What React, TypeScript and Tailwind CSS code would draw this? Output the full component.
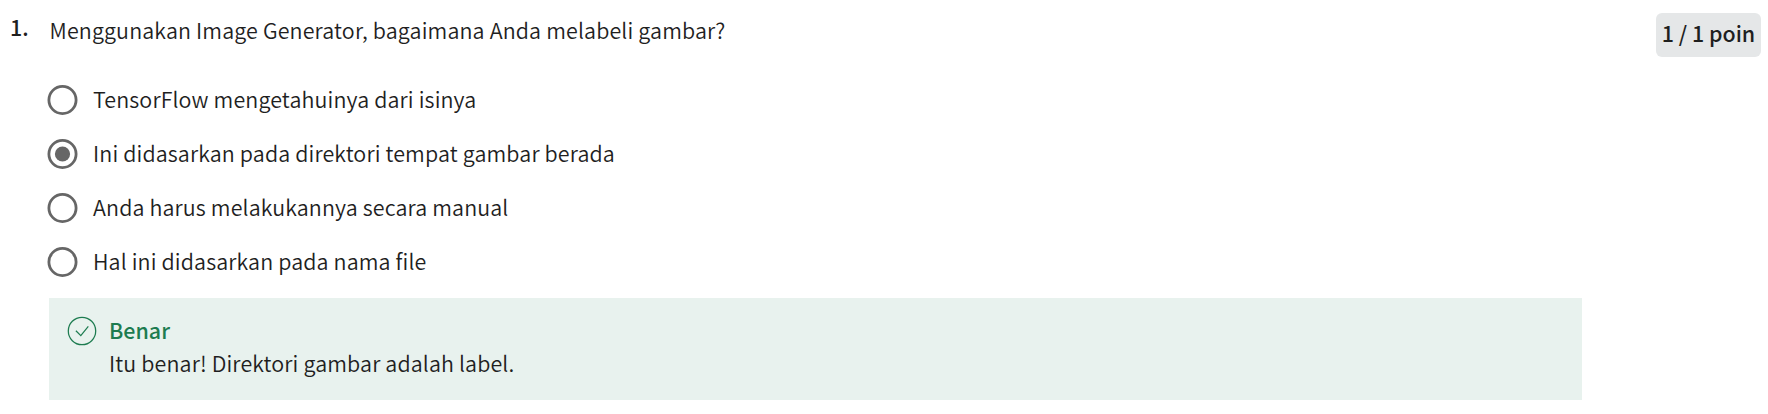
const options = [
  'TensorFlow mengetahuinya dari isinya',
  'Ini didasarkan pada direktori tempat gambar berada',
  'Anda harus melakukannya secara manual',
  'Hal ini didasarkan pada nama file',
];
const selected = 1;

function Radio({ checked }: { checked: boolean }) {
  return (
    <svg viewBox="0 0 31 30" className="h-[30px] w-[31px] shrink-0" fill="none">
      <circle cx="15.5" cy="15" r="13.6" stroke="#666" strokeWidth="2.8" />
      {checked && <circle cx="15.5" cy="15" r="7.6" fill="#666" />}
    </svg>
  );
}

function Feedback() {
  return (
    <section className="flex h-[102px] w-[1533px] gap-3 bg-[#e8f2ee] pl-[18px] pt-[15px] leading-[33px]">
      <svg viewBox="0 0 30 30" className="mt-[3px] size-[30px] shrink-0" fill="none" stroke="#1d7c50" strokeWidth="1.25">
        <circle cx="15" cy="15" r="13.7" />
        <path d="M8.9 14.8l4.9 4.8 7.5-9.3" />
      </svg>
      <div>
        <p className="font-medium text-[#1d7c50]">Benar</p>
        <p className="font-[350] tracking-[0.13px]">Itu benar! Direktori gambar adalah label.</p>
      </div>
    </section>
  );
}

export default function App() {
  return (
    <main className="flex h-[414px] w-[1768px] overflow-hidden bg-white font-['Noto_Sans_CJK_SC',sans-serif] text-[21.45px] leading-[30px] text-[#1f1f1f]">
      <div className="w-[49px] shrink-0 pl-[10px] pt-3 font-medium">1.</div>
      <div className="flex w-[1533px] shrink-0 flex-col pt-[15px]">
        <h1 className="pl-[0.5px] font-[350] tracking-[0.14px]">Menggunakan Image Generator, bagaimana Anda melabeli gambar?</h1>
        <div className="-ml-0.5 mt-7 flex flex-col">
          {options.map((text, i) => (
            <label key={text} className="flex h-[54px] items-center gap-[15px]">
              <Radio checked={i === selected} />
              <span className="pb-0.5 font-[350] tracking-[0.13px]">{text}</span>
            </label>
          ))}
        </div>
        <div className="mt-[9px]">
          <Feedback />
        </div>
      </div>
      <div className="flex grow justify-end pr-[7px] pt-[13px]">
        <div className="flex h-11 w-[105px] justify-center rounded-md bg-[#e5e7e8] pt-[5px] font-medium">1 / 1 poin</div>
      </div>
    </main>
  );
}
